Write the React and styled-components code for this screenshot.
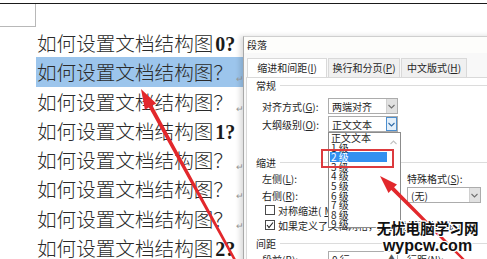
import React from "react";
import styled, { createGlobalStyle } from "styled-components";

const GlobalStyle = createGlobalStyle`
  html, body {
    margin: 0;
    padding: 0;
    background: #fff;
  }
`;

const Screen = styled.div`
  position: relative;
  width: 487px;
  height: 259px;
  overflow: hidden;
  background: #fff;
  padding-top: 3px;
  box-sizing: border-box;
`;

const TopRule = styled.div`
  height: 1px;
  background: #1a1a1a;
`;

const CornerMark = styled.div`
  width: 35px;
  height: 22px;
  border-right: 1px solid #b8b8b8;
  border-bottom: 1px solid #b8b8b8;
`;

const DocBody = styled.div`
  margin-top: 1px;
  font-family: "Noto Sans CJK SC", sans-serif;
  font-size: 19.6px;
  font-weight: 300;
  color: #2a2a2a;
`;

const Line = styled.p`
  margin: 0 0 0 36px;
  padding-left: 1px;
  height: 29.3px;
  line-height: 29.3px;
  white-space: nowrap;
  background: ${(p) => (p.$selected ? "#9cc5ec" : "transparent")};
`;

const Num = styled.span`
  font-family: "Liberation Serif", serif;
  font-size: 20px;
  font-weight: 700;
  margin-left: 2px;
  color: #1a1a1a;
`;

const ParaMark = styled.span`
  font-family: "DejaVu Sans", sans-serif;
  font-size: 9px;
  color: #9a9a9a;
  margin-left: 3px;
  vertical-align: -2px;
`;

/* ---- paragraph dialog ---- */

const Dialog = styled.section`
  position: absolute;
  left: 243px;
  top: 36px;
  width: 262px;
  height: 240px;
  background: #f8f8f8;
  border-left: 1px solid #a9a9a9;
  border-top: 1px solid #cfcfcf;
  box-shadow: -3px 0 5px rgba(0, 0, 0, 0.14);
  font-family: "Noto Sans CJK SC", sans-serif;
  font-size: 10px;
  color: #262626;
`;

const TitleBar = styled.div`
  height: 16px;
  line-height: 16px;
  padding-left: 3px;
  font-size: 10px;
  background: #fdfdfb;
`;

const TabStrip = styled.div`
  display: flex;
  align-items: flex-end;
  margin-top: 5px;
  padding-left: 3px;
  height: 19px;
`;

const Tab = styled.div`
  width: ${(p) => p.$width}px;
  height: 19px;
  line-height: 18px;
  text-align: center;
  box-sizing: border-box;
  border: 1px solid #d9d9d9;
  border-bottom: none;
  margin-right: 1px;
  background: ${(p) => (p.$active ? "#fff" : "#f0f0f0")};
  position: relative;
  z-index: ${(p) => (p.$active ? 1 : 0)};
  white-space: nowrap;
`;

const TabPage = styled.div`
  margin-left: 2px;
  background: #fff;
  border: 1px solid #d9d9d9;
  height: 220px;
`;

const SectionHead = styled.div`
  display: flex;
  align-items: center;
  gap: 4px;
  height: 14px;
  margin-top: ${(p) => p.$mt || 0}px;
  padding-left: 9px;

  &::after {
    content: "";
    flex: 1;
    border-top: 1px solid #dcdcdc;
  }
`;

const Row = styled.div`
  display: flex;
  align-items: center;
  height: ${(p) => p.$h}px;
  margin-top: ${(p) => p.$mt}px;
  padding-left: 15px;
  white-space: nowrap;
`;

const Label = styled.span`
  width: 66px;
  flex: none;
`;

const RightCol = styled.div`
  margin-left: 9px;
  height: 100%;
  display: flex;
  align-items: center;
`;

const SelectBox = styled.div`
  display: flex;
  align-items: center;
  width: ${(p) => p.$width}px;
  height: 100%;
  box-sizing: border-box;
  border: 1px solid #acacac;
  background: #fff;
  padding-left: 3px;
  flex: none;
`;

const SelectText = styled.span`
  flex: 1;
  white-space: nowrap;
  overflow: hidden;
`;

const DropButton = styled.span`
  width: 11px;
  height: 100%;
  display: flex;
  align-items: center;
  justify-content: center;
  background: ${(p) => (p.$hot ? "#e3effa" : "#e1e1e1")};
  box-shadow: ${(p) => (p.$hot ? "inset 0 0 0 1px #4d8fcf" : "inset 1px 0 0 #d0d0d0")};
  color: ${(p) => (p.$hot ? "#2f6aa6" : "#707070")};
`;

const SpinBox = styled.div`
  width: 70px;
  height: 100%;
  box-sizing: border-box;
  border: 1px solid #acacac;
  display: flex;
  align-items: center;
  padding-left: 3px;
  flex: none;
`;

const SpinText = styled.span`
  flex: 1;
`;

const SpinButton = styled.span`
  width: 11px;
  height: 100%;
  display: flex;
  align-items: flex-start;
  justify-content: center;
  font-size: 6px;
  color: #555;
`;

const CheckRow = styled.label`
  display: flex;
  align-items: center;
  gap: 3px;
  height: 14px;
  margin-top: ${(p) => p.$mt}px;
  padding-left: 18px;
  white-space: nowrap;
`;

const CheckBox = styled.span`
  width: 10px;
  height: 10px;
  box-sizing: border-box;
  border: 1px solid #4a4a4a;
  background: #fff;
  display: flex;
  align-items: center;
  justify-content: center;
  color: #222;
`;

/* open dropdown list of 大纲级别 */
const ListBox = styled.div`
  position: absolute;
  left: 84px;
  top: 95px;
  width: 73px;
  height: 96px;
  box-sizing: border-box;
  border: 1px solid #8c8c8c;
  background: #fff;
  display: flex;
  z-index: 2;
`;

const ListItems = styled.ul`
  flex: 1;
  margin: 0;
  padding: 0;
  list-style: none;
`;

const ListItem = styled.li`
  height: 9.6px;
  line-height: 9.6px;
  margin-left: 1px;
  padding-left: 1px;
  white-space: nowrap;
  background: ${(p) => (p.$active ? "#3390f0" : "transparent")};
  color: ${(p) => (p.$active ? "#fff" : "#262626")};
`;

const ScrollTrack = styled.div`
  width: 13px;
  display: flex;
  justify-content: center;
  padding-top: 7px;
  color: #c2c2c2;
`;

const RedFrame = styled.div`
  position: absolute;
  left: 77px;
  top: 112px;
  width: 73px;
  height: 19px;
  box-sizing: border-box;
  border: 2px solid #dc3a3e;
  z-index: 3;
`;

/* annotations */
const ArrowLayer = styled.svg`
  position: absolute;
  left: 0;
  top: 0;
  width: 487px;
  height: 259px;
  z-index: 5;
  pointer-events: none;
`;

const Watermark = styled.div`
  position: absolute;
  left: 370px;
  top: 218px;
  width: 115px;
  text-align: center;
  z-index: 6;
  font-weight: 700;
  color: #111;
  text-shadow: 1px 0 #fff, -1px 0 #fff, 0 1px #fff, 0 -1px #fff,
    1px 1px #fff, -1px -1px #fff, 1px -1px #fff, -1px 1px #fff;
`;

const MarkCn = styled.div`
  font-family: "Noto Sans CJK SC", sans-serif;
  font-size: 14.6px;
  line-height: 20px;
`;

const MarkUrl = styled.div`
  font-family: "Liberation Sans", Arial, sans-serif;
  font-size: 16px;
  line-height: 16px;
`;

function Chevron({ up }) {
  return (
    <svg width="7" height="5" viewBox="0 0 7 5">
      <polyline
        points={up ? "0.5,4 3.5,1 6.5,4" : "0.5,1 3.5,4 6.5,1"}
        fill="none"
        stroke="currentColor"
        strokeWidth="1.1"
      />
    </svg>
  );
}

function arrowPoints([tx, ty], [hx, hy], headLen, headHalf, neckHalf, tailHalf) {
  const dx = hx - tx;
  const dy = hy - ty;
  const len = Math.hypot(dx, dy);
  const ux = dx / len;
  const uy = dy / len;
  const nx = -uy;
  const ny = ux;
  const bx = hx - ux * headLen;
  const by = hy - uy * headLen;
  return [
    [tx + nx * tailHalf, ty + ny * tailHalf],
    [bx + nx * neckHalf, by + ny * neckHalf],
    [bx + nx * headHalf, by + ny * headHalf],
    [hx, hy],
    [bx - nx * headHalf, by - ny * headHalf],
    [bx - nx * neckHalf, by - ny * neckHalf],
    [tx - nx * tailHalf, ty - ny * tailHalf],
  ]
    .map((p) => p.map((v) => v.toFixed(1)).join(","))
    .join(" ");
}

const lines = [
  { num: "0?" },
  { selected: true },
  {},
  { num: "1?" },
  {},
  {},
  {},
  { num: "2?" },
];

const levels = ["正文文本", "1 级", "2 级", "3 级", "4 级", "5 级", "6 级", "7 级", "8 级", "9 级"];

export default function App() {
  return (
    <Screen>
      <GlobalStyle />
      <TopRule />
      <CornerMark />
      <DocBody>
        {lines.map((l, i) => (
          <Line key={i} $selected={l.selected}>
            如何设置文档结构图
            {l.num ? (
              <Num>{l.num}</Num>
            ) : (
              <>
                ？<ParaMark>↵</ParaMark>
              </>
            )}
          </Line>
        ))}
      </DocBody>

      <Dialog>
        <TitleBar>段落</TitleBar>
        <TabStrip>
          <Tab $active $width={80}>缩进和间距(<u>I</u>)</Tab>
          <Tab $width={72}>换行和分页(<u>P</u>)</Tab>
          <Tab $width={66}>中文版式(<u>H</u>)</Tab>
        </TabStrip>
        <TabPage>
          <SectionHead>常规</SectionHead>
          <Row $h={16} $mt={6}>
            <Label>对齐方式(<u>G</u>):</Label>
            <SelectBox $width={70}>
              <SelectText>两端对齐</SelectText>
              <DropButton><Chevron /></DropButton>
            </SelectBox>
          </Row>
          <Row $h={16} $mt={2}>
            <Label>大纲级别(<u>O</u>):</Label>
            <SelectBox $width={70}>
              <SelectText>正文文本</SelectText>
              <DropButton $hot><Chevron /></DropButton>
            </SelectBox>
          </Row>

          <SectionHead $mt={23}>缩进</SectionHead>
          <Row $h={14} $mt={2}>
            <Label>左侧(<u>L</u>):</Label>
            <SpinBox />
            <RightCol>特殊格式(<u>S</u>):</RightCol>
          </Row>
          <Row $h={16} $mt={2}>
            <Label>右侧(<u>R</u>):</Label>
            <SpinBox />
            <RightCol>
              <SelectBox $width={74}>
                <SelectText>(无)</SelectText>
                <DropButton><Chevron /></DropButton>
              </SelectBox>
            </RightCol>
          </Row>
          <CheckRow $mt={0}>
            <CheckBox />
            对称缩进(<u>M</u>)
          </CheckRow>
          <CheckRow $mt={1}>
            <CheckBox>
              <svg width="8" height="8" viewBox="0 0 8 8">
                <polyline points="1,4 3,6.5 7,1.5" fill="none" stroke="currentColor" strokeWidth="1.1" />
              </svg>
            </CheckBox>
            如果定义了文档网格，则自动调整右缩进(<u>D</u>)
          </CheckRow>

          <SectionHead $mt={4}>间距</SectionHead>
          <Row $h={16} $mt={1}>
            <Label>段前(<u>B</u>):</Label>
            <SpinBox>
              <SpinText>0 行</SpinText>
              <SpinButton>▲</SpinButton>
            </SpinBox>
            <RightCol>行距(<u>N</u>):</RightCol>
          </Row>
        </TabPage>

        <ListBox>
          <ListItems>
            {levels.map((lv, i) => (
              <ListItem key={lv} $active={i === 2}>{lv}</ListItem>
            ))}
          </ListItems>
          <ScrollTrack><Chevron up /></ScrollTrack>
        </ListBox>
        <RedFrame />
      </Dialog>

      <ArrowLayer viewBox="0 0 487 259">
        <polygon points={arrowPoints([236, 262], [141, 89], 20, 6.5, 2, 1.2)} fill="#e2282c" />
        <polygon points={arrowPoints([466, 262], [380, 176], 18, 6, 2, 1.2)} fill="#e2282c" />
      </ArrowLayer>

      <Watermark>
        <MarkCn>无忧电脑学习网</MarkCn>
        <MarkUrl>wypcw.com</MarkUrl>
      </Watermark>
    </Screen>
  );
}
